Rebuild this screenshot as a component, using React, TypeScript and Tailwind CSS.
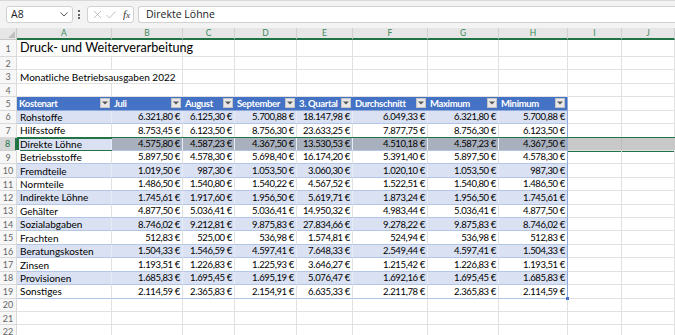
import React from "react";

const GRID =
  "grid grid-cols-[17px_95px_71px_52px_62px_56px_75px_71px_69px_54px_53px]";

const letters = ["A", "B", "C", "D", "E", "F", "G", "H", "I", "J"];
const headers = [
  "Kostenart",
  "Juli",
  "August",
  "September",
  "3. Quartal",
  "Durchschnitt",
  "Maximum",
  "Minimum",
];

const data: string[][] = [
  ["Rohstoffe", "6.321,80 €", "6.125,30 €", "5.700,88 €", "18.147,98 €", "6.049,33 €", "6.321,80 €", "5.700,88 €"],
  ["Hilfsstoffe", "8.753,45 €", "6.123,50 €", "8.756,30 €", "23.633,25 €", "7.877,75 €", "8.756,30 €", "6.123,50 €"],
  ["Direkte Löhne", "4.575,80 €", "4.587,23 €", "4.367,50 €", "13.530,53 €", "4.510,18 €", "4.587,23 €", "4.367,50 €"],
  ["Betriebsstoffe", "5.897,50 €", "4.578,30 €", "5.698,40 €", "16.174,20 €", "5.391,40 €", "5.897,50 €", "4.578,30 €"],
  ["Fremdteile", "1.019,50 €", "987,30 €", "1.053,50 €", "3.060,30 €", "1.020,10 €", "1.053,50 €", "987,30 €"],
  ["Normteile", "1.486,50 €", "1.540,80 €", "1.540,22 €", "4.567,52 €", "1.522,51 €", "1.540,80 €", "1.486,50 €"],
  ["Indirekte Löhne", "1.745,61 €", "1.917,60 €", "1.956,50 €", "5.619,71 €", "1.873,24 €", "1.956,50 €", "1.745,61 €"],
  ["Gehälter", "4.877,50 €", "5.036,41 €", "5.036,41 €", "14.950,32 €", "4.983,44 €", "5.036,41 €", "4.877,50 €"],
  ["Sozialabgaben", "8.746,02 €", "9.212,81 €", "9.875,83 €", "27.834,66 €", "9.278,22 €", "9.875,83 €", "8.746,02 €"],
  ["Frachten", "512,83 €", "525,00 €", "536,98 €", "1.574,81 €", "524,94 €", "536,98 €", "512,83 €"],
  ["Beratungskosten", "1.504,33 €", "1.546,59 €", "4.597,41 €", "7.648,33 €", "2.549,44 €", "4.597,41 €", "1.504,33 €"],
  ["Zinsen", "1.193,51 €", "1.226,83 €", "1.225,93 €", "3.646,27 €", "1.215,42 €", "1.226,83 €", "1.193,51 €"],
  ["Provisionen", "1.685,83 €", "1.695,45 €", "1.695,19 €", "5.076,47 €", "1.692,16 €", "1.695,45 €", "1.685,83 €"],
  ["Sonstiges", "2.114,59 €", "2.365,83 €", "2.154,91 €", "6.635,33 €", "2.211,78 €", "2.365,83 €", "2.114,59 €"],
];

function RowHeader({ n, selected }: { n: number; selected?: boolean }) {
  return selected ? (
    <div className="flex items-center justify-center bg-[#d6d6d6] border-r-2 border-[#217346] border-b border-b-[#d0d0d0] text-[9px] text-[#217346] leading-none">
      {n}
    </div>
  ) : (
    <div className="flex items-center justify-center bg-[#f7f7f7] border-r border-b border-[#dadada] text-[9px] text-[#666] leading-none">
      {n}
    </div>
  );
}

function Empty() {
  return <div className="border-r border-b border-[#e1e1e1]" />;
}

function FilterBtn() {
  return (
    <div className="absolute right-[2px] top-1/2 -translate-y-1/2 w-[10px] h-[10px] bg-[#e8e8e8] border border-[#c4c4c4] flex items-center justify-center">
      <svg width="6" height="4" viewBox="0 0 6 4">
        <path d="M0 0.5 L6 0.5 L3 3.5 Z" fill="#555" />
      </svg>
    </div>
  );
}

function App() {
  const rowH = "h-[13.43px]";
  return (
    <div className="w-[675px] h-[335px] overflow-hidden bg-white font-['Lato',sans-serif] text-black">
      {/* formula bar */}
      <div className="h-[28px] bg-[#f3f3f3] border-t border-[#d8d8d8] flex items-start pt-[5px] font-['Open_Sans',sans-serif]">
        <div className="ml-[6px] w-[67px] h-[17px] bg-white border border-[#d1d1d1] rounded-[3px] flex items-center justify-between pl-[4px] pr-[4px]">
          <span className="text-[10.5px] text-[#222] leading-none">A8</span>
          <svg width="8" height="5" viewBox="0 0 8 5">
            <path d="M0.5 0.5 L4 4 L7.5 0.5" stroke="#555" strokeWidth="1" fill="none" />
          </svg>
        </div>
        <div className="ml-[5px] h-[17px] flex flex-col items-center justify-center gap-[1.5px]">
          <div className="w-[2px] h-[2px] bg-[#666]" />
          <div className="w-[2px] h-[2px] bg-[#666]" />
          <div className="w-[2px] h-[2px] bg-[#666]" />
        </div>
        <div className="ml-[7px] w-[47px] h-[17px] bg-white border border-[#d1d1d1] rounded-[3px] flex items-center pl-[5px]">
          <svg width="9" height="9" viewBox="0 0 9 9">
            <path d="M1 1 L8 8 M8 1 L1 8" stroke="#c2c2c2" strokeWidth="1" />
          </svg>
          <svg className="ml-[4px]" width="10" height="8" viewBox="0 0 10 8">
            <path d="M0.5 4 L3.5 7 L9.5 0.5" stroke="#c2c2c2" strokeWidth="1" fill="none" />
          </svg>
          <span className="ml-[7px] font-['Liberation_Serif',serif] italic text-[11px] text-[#333] leading-none">
            f<span className="text-[9px]">x</span>
          </span>
        </div>
        <div className="ml-[4px] flex-1 h-[17px] bg-white border border-r-0 border-[#d1d1d1] rounded-l-[3px] flex items-center pl-[7px]">
          <span className="text-[10.5px] text-[#222] leading-none">Direkte Löhne</span>
        </div>
      </div>

      {/* column headers */}
      <div className={`${GRID} h-[12px]`}>
        <div className="bg-[#e6e6e6] border-r border-[#c8c8c8] border-b border-b-[#c8c8c8] relative">
          <svg className="absolute right-[1px] bottom-[1px]" width="7" height="7" viewBox="0 0 7 7">
            <path d="M7 0 L7 7 L0 7 Z" fill="#c0c0c0" />
          </svg>
        </div>
        {letters.map((l) => (
          <div
            key={l}
            className="bg-[#e6e6e6] border-r border-[#cfcfcf] border-b-2 border-b-[#217346] flex items-center justify-center text-[8.5px] text-[#3b8a5a] leading-none"
          >
            {l}
          </div>
        ))}
      </div>

      {/* row 1 */}
      <div className={`${GRID} h-[17px]`}>
        <RowHeader n={1} />
        <div className="border-b border-[#e1e1e1] relative">
          <span className="absolute left-[3px] bottom-[0px] text-[12.6px] leading-none whitespace-nowrap pb-[1px]">
            Druck- und Weiterverarbeitung
          </span>
        </div>
        {Array.from({ length: 9 }).map((_, i) => (
          <Empty key={i} />
        ))}
      </div>

      {/* row 2 */}
      <div className={`${GRID} ${rowH}`}>
        <RowHeader n={2} />
        {Array.from({ length: 10 }).map((_, i) => (
          <Empty key={i} />
        ))}
      </div>

      {/* row 3 */}
      <div className={`${GRID} ${rowH}`}>
        <RowHeader n={3} />
        <div className="border-b border-[#e1e1e1] relative">
          <span className="absolute left-[3px] top-1/2 -translate-y-1/2 text-[10px] leading-none whitespace-nowrap">
            Monatliche Betriebsausgaben 2022
          </span>
        </div>
        {Array.from({ length: 9 }).map((_, i) => (
          <Empty key={i} />
        ))}
      </div>

      {/* row 4 */}
      <div className={`${GRID} ${rowH}`}>
        <RowHeader n={4} />
        {Array.from({ length: 10 }).map((_, i) => (
          <Empty key={i} />
        ))}
      </div>

      {/* row 5 table header */}
      <div className={`${GRID} ${rowH}`}>
        <RowHeader n={5} />
        {headers.map((h, i) => (
          <div
            key={h}
            className={
              i === 7
                ? "relative overflow-hidden bg-[#4472c4] border-r border-[#8ea9db] border-b border-b-[#8ea9db] flex items-center pl-[2px] text-white font-bold text-[9.5px] tracking-[-0.35px] leading-none whitespace-nowrap"
                : "relative overflow-hidden bg-[#4472c4] border-b border-[#8ea9db] flex items-center pl-[2px] text-white font-bold text-[9.5px] tracking-[-0.35px] leading-none whitespace-nowrap"
            }
          >
            {h}
            <FilterBtn />
          </div>
        ))}
        <Empty />
        <Empty />
      </div>

      {/* data rows */}
      {data.map((row, ri) => {
        const n = ri + 6;
        const banded = n % 2 === 0;
        const selected = n === 8;
        return (
          <div key={n} className={`${GRID} ${rowH} relative`}>
            <RowHeader n={n} selected={selected} />
            {row.map((v, ci) => {
              const last = ci === 7;
              let bg = banded ? "bg-[#d9e1f2]" : "bg-white";
              if (selected && ci > 0) bg = "bg-[#a9b0bd]";
              const vline = last
                ? "border-r-[#8ea9db]"
                : banded
                ? "border-r-[#e6ebf5]"
                : "border-r-[#e1e1e1]";
              const align =
                ci === 0
                  ? "justify-start pl-[3px] text-[10px]"
                  : "justify-end pr-[2px] text-[9.5px] tracking-[-0.35px]";
              return (
                <div
                  key={ci}
                  className={`${bg} border-r ${vline} border-b border-b-[#b4c6e7] flex items-center ${align} leading-none whitespace-nowrap relative`}
                >
                  {v}
                  {n === 19 && last && (
                    <div className="absolute right-[-2px] bottom-[-2px] w-[3px] h-[3px] bg-[#4472c4]" />
                  )}
                </div>
              );
            })}
            <div className={selected ? "bg-[#c8c8c8] border-r border-[#bdbdbd] border-b border-b-[#e1e1e1]" : "border-r border-b border-[#e1e1e1]"} />
            <div className={selected ? "bg-[#c8c8c8] border-b border-[#e1e1e1]" : "border-r border-b border-[#e1e1e1]"} />
            {selected && (
              <>
                <div className="absolute left-[17px] right-0 top-[-1px] bottom-[-1px] border-y border-[#217346] pointer-events-none" />
                <div className="absolute left-[17px] w-[95px] top-[-1px] bottom-[-1px] border-2 border-r-0 border-[#217346] pointer-events-none" />
                <div className="absolute left-[16px] bottom-[-3px] w-[4px] h-[4px] bg-[#217346] border border-white pointer-events-none" />
              </>
            )}
          </div>
        );
      })}

      {/* rows 20-22 */}
      {[20, 21, 22].map((n) => (
        <div key={n} className={`${GRID} ${rowH}`}>
          <RowHeader n={n} />
          {Array.from({ length: 10 }).map((_, i) => (
            <Empty key={i} />
          ))}
        </div>
      ))}
    </div>
  );
}

export default App;
